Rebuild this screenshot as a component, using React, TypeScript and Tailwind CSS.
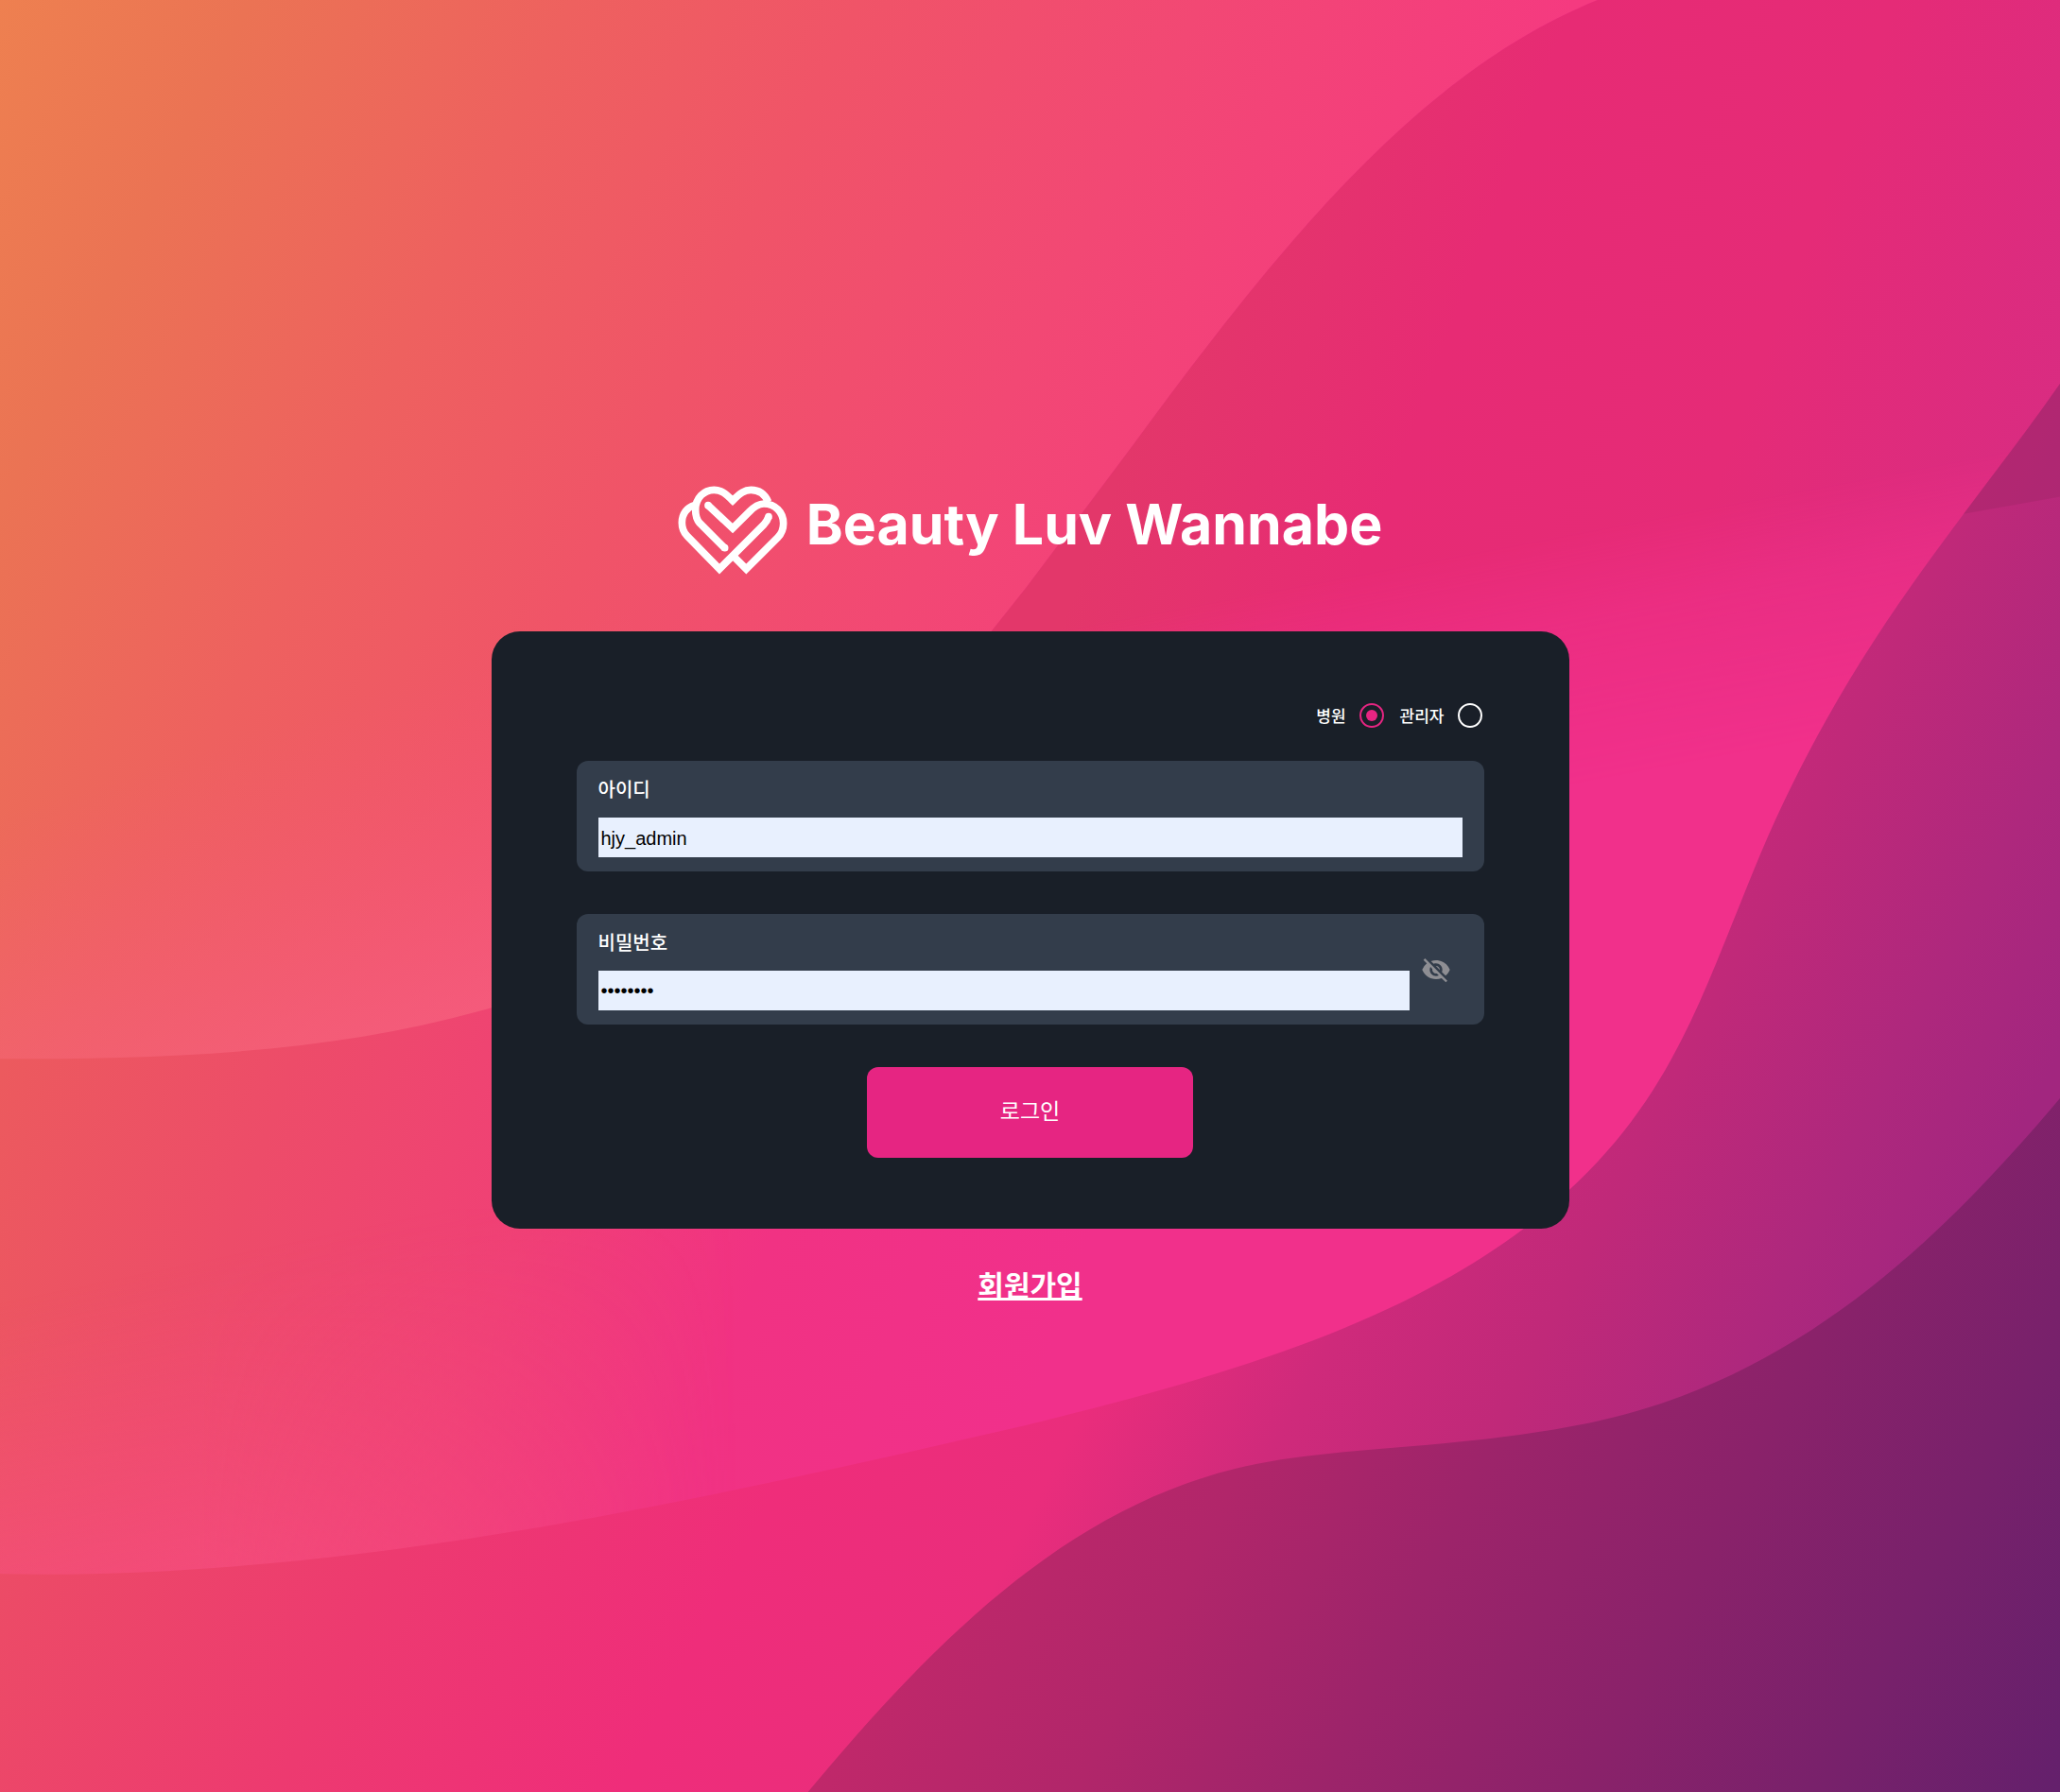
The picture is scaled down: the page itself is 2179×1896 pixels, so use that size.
import { useState } from "react";
import { MdVisibilityOff, MdVisibility } from "react-icons/md";

const WAVE =
  "M1568 292C1500 390 1410 485 1340 650C1290 770 1270 850 1160 935C1060 1010 930 1048 780 1085C520 1145 260 1203 0 1198V1364H1568Z";

function Backdrop() {
  return (
    <svg
      aria-hidden="true"
      className="absolute inset-0 h-full w-full"
      viewBox="0 0 1568 1364"
      preserveAspectRatio="none"
    >
      <defs>
        <linearGradient id="dawn" gradientUnits="userSpaceOnUse" x1="0" y1="0" x2="1100" y2="540">
          <stop offset="0" stopColor="#ee8050" />
          <stop offset="0.14" stopColor="#eb7354" />
          <stop offset="0.32" stopColor="#ee615f" />
          <stop offset="0.48" stopColor="#f05468" />
          <stop offset="0.67" stopColor="#f24874" />
          <stop offset="0.88" stopColor="#f53a80" />
        </linearGradient>
        <linearGradient id="dawnEdge" gradientUnits="userSpaceOnUse" x1="60" y1="600" x2="140" y2="840">
          <stop offset="0" stopColor="#f7587c" stopOpacity="0" />
          <stop offset="1" stopColor="#f8648a" stopOpacity="0.5" />
        </linearGradient>
        <linearGradient id="band" gradientUnits="userSpaceOnUse" x1="0" y1="820" x2="780" y2="1090">
          <stop offset="0" stopColor="#ec5a5e" />
          <stop offset="0.25" stopColor="#ed4c69" />
          <stop offset="0.5" stopColor="#f04076" />
          <stop offset="0.72" stopColor="#f13283" />
          <stop offset="1" stopColor="#f1308b" />
        </linearGradient>
        <linearGradient id="bandEdge" gradientUnits="userSpaceOnUse" x1="150" y1="960" x2="200" y2="1200">
          <stop offset="0" stopColor="#f74d80" stopOpacity="0" />
          <stop offset="1" stopColor="#f74d84" stopOpacity="0.6" />
        </linearGradient>
        <linearGradient id="bandEdgeFade" gradientUnits="userSpaceOnUse" x1="150" y1="0" x2="560" y2="0">
          <stop offset="0" stopColor="#fff" />
          <stop offset="1" stopColor="#000" />
        </linearGradient>
        <mask id="bandEdgeMask" maskUnits="userSpaceOnUse" x="0" y="0" width="1568" height="1364">
          <rect width="1568" height="1364" fill="url(#bandEdgeFade)" />
        </mask>
        <linearGradient id="crest" gradientUnits="userSpaceOnUse" x1="900" y1="230" x2="1568" y2="480">
          <stop offset="0" stopColor="#e3376a" />
          <stop offset="0.28" stopColor="#e72b74" />
          <stop offset="0.6" stopColor="#e52b77" />
          <stop offset="1" stopColor="#d62c84" />
        </linearGradient>
        <linearGradient id="fade" gradientUnits="userSpaceOnUse" x1="1200" y1="405" x2="1235" y2="590">
          <stop offset="0" stopColor="#fff" />
          <stop offset="0.35" stopColor="#777" />
          <stop offset="1" stopColor="#000" />
        </linearGradient>
        <mask id="crestMask" maskUnits="userSpaceOnUse" x="0" y="0" width="1568" height="1364">
          <rect width="1568" height="1364" fill="url(#fade)" />
        </mask>
        <linearGradient id="wave" gradientUnits="userSpaceOnUse" x1="0" y1="0" x2="1600" y2="818">
          <stop offset="0.3" stopColor="#ec4c66" />
          <stop offset="0.45" stopColor="#ed3a70" />
          <stop offset="0.58" stopColor="#ef2d7a" />
          <stop offset="0.68" stopColor="#ea2d7c" />
          <stop offset="0.76" stopColor="#cf2a7b" />
          <stop offset="0.84" stopColor="#c02979" />
          <stop offset="0.92" stopColor="#ae287d" />
          <stop offset="0.98" stopColor="#a2267f" />
        </linearGradient>
        <clipPath id="waveClip">
          <path d={WAVE} />
        </clipPath>
        <linearGradient id="dusk" gradientUnits="userSpaceOnUse" x1="0" y1="0" x2="1794" y2="917">
          <stop offset="0.58" stopColor="#c0286a" />
          <stop offset="0.67" stopColor="#b1266a" />
          <stop offset="0.75" stopColor="#9d246a" />
          <stop offset="0.84" stopColor="#8a226a" />
          <stop offset="0.92" stopColor="#78216b" />
          <stop offset="1" stopColor="#64206c" />
        </linearGradient>
      </defs>
      <rect width="1568" height="1364" fill="url(#dawn)" />
      <rect y="400" width="480" height="440" fill="url(#dawnEdge)" />
      <path
        d="M1216 0C1080 55 973 188 863 338L782 446L755 480C640 620 520 728 374 767C250 803 120 806 0 806V1364H1568V0Z"
        fill="url(#band)"
      />
      <rect y="920" width="700" height="300" fill="url(#bandEdge)" mask="url(#bandEdgeMask)" />
      <path
        d="M1216 0C1080 55 973 188 863 338L782 446L755 480C700 545 650 600 600 640H1568V0Z"
        fill="url(#crest)"
        mask="url(#crestMask)"
      />
      <path d={WAVE} fill="url(#wave)" />
      <path d="M1568 280H1440V401L1568 378Z" fill="#9c2664" fillOpacity="0.35" clipPath="url(#waveClip)" />
      <path
        d="M1568 836C1480 940 1370 1050 1210 1083C1100 1105 1010 1100 940 1118C810 1150 710 1250 615 1364H1568Z"
        fill="url(#dusk)"
      />
    </svg>
  );
}

function HeartLogo() {
  return (
    <svg
      aria-hidden="true"
      className="h-[94px] w-[116px]"
      viewBox="45 41 348 282"
      fill="none"
      stroke="#fff"
      strokeWidth="23"
      strokeMiterlimit="10"
    >
      <path d="M194 239L114 159C104 148 101 136 101 117C101 80 128 54 160 54C182 54 195 64 219 88C243 64 257 54 277 54C303 54 322 69 332 92" />
      <path d="M141 103L219 176L270 125C286 108 300 98 318 98C354 98 380 125 380 160C380 180 373 194 362 205L262 305L226 269" />
      <path d="M97 103C75 109 58 130 58 158C58 175 64 190 75 201L177 305L318 164C328 153 331 146 333 139" />
      <g fill="#fff" stroke="none">
        <circle cx="194" cy="238" r="11.5" />
        <circle cx="141" cy="103" r="11.5" />
        <circle cx="333" cy="139" r="11.5" />
      </g>
    </svg>
  );
}

type RoleRadioProps = {
  label: string;
  value: string;
  checked: boolean;
  onSelect: (value: string) => void;
};

function RoleRadio({ label, value, checked, onSelect }: RoleRadioProps) {
  return (
    <label className="flex cursor-pointer items-center gap-[14px] text-[17px] leading-6 font-medium text-white">
      {label}
      <input
        type="radio"
        name="role"
        value={value}
        checked={checked}
        onChange={() => onSelect(value)}
        className="grid size-[26px] appearance-none place-items-center rounded-full border-2 border-white before:size-3 before:rounded-full checked:border-[#e62582] checked:before:bg-[#e62582]"
      />
    </label>
  );
}

export default function App() {
  const [role, setRole] = useState("hospital");
  const [id, setId] = useState("hjy_admin");
  const [password, setPassword] = useState("password");
  const [visible, setVisible] = useState(false);

  return (
    <main className="relative flex min-h-screen flex-col items-center justify-center overflow-hidden px-6 pb-[2px] font-['Noto_Sans_CJK_KR',sans-serif]">
      <Backdrop />
      <header className="relative mb-[60px] flex items-center gap-5">
        <HeartLogo />
        <h1 className="pb-3 font-[Inter,sans-serif] text-[59px] leading-[76px] font-bold whitespace-nowrap text-white">
          Beauty Luv Wannabe
        </h1>
      </header>

      <form
        className="relative flex w-full max-w-[1140px] flex-col rounded-[30px] bg-[#191f28] px-[90px] pt-[76px] pb-[75px]"
        onSubmit={(e) => e.preventDefault()}
      >
        <div className="mb-[35px] flex items-center justify-end gap-[17px] pr-[2px]">
          <RoleRadio label="병원" value="hospital" checked={role === "hospital"} onSelect={setRole} />
          <RoleRadio label="관리자" value="admin" checked={role === "admin"} onSelect={setRole} />
        </div>

        <div className="mb-[45px] flex flex-col rounded-xl bg-[#333d4b] px-[23px] py-[15px]">
          <label htmlFor="userId" className="mb-[15px] text-xl leading-[30px] font-medium text-white">
            아이디
          </label>
          <input
            id="userId"
            value={id}
            onChange={(e) => setId(e.target.value)}
            className="h-[42px] w-full bg-[#e8f0fe] px-[3px] pt-[2px] font-['Liberation_Sans',sans-serif] text-xl text-black outline-none"
          />
        </div>

        <div className="mb-[45px] flex items-center rounded-xl bg-[#333d4b] py-[15px] pr-[35px] pl-[23px]">
          <div className="flex flex-1 flex-col">
            <label htmlFor="password" className="mb-[15px] text-xl leading-[30px] font-medium text-white">
              비밀번호
            </label>
            <input
              id="password"
              type={visible ? "text" : "password"}
              value={password}
              onChange={(e) => setPassword(e.target.value)}
              className="h-[42px] w-full bg-[#e8f0fe] px-[3px] font-['Liberation_Sans',sans-serif] text-xl text-black outline-none"
            />
          </div>
          <button
            type="button"
            aria-label="비밀번호 표시"
            onClick={() => setVisible(!visible)}
            className="ml-3 cursor-pointer text-[#8e8e93]"
          >
            {visible ? <MdVisibility className="size-8" /> : <MdVisibilityOff className="size-8" />}
          </button>
        </div>

        <button
          type="submit"
          className="h-24 w-[345px] cursor-pointer self-center rounded-xl bg-[#e62582] pb-[6px] text-[23px] leading-8 text-white"
        >
          로그인
        </button>
      </form>

      <a href="#signup" className="relative mt-9 text-3xl leading-[44px] font-bold text-white underline">
        회원가입
      </a>
    </main>
  );
}
